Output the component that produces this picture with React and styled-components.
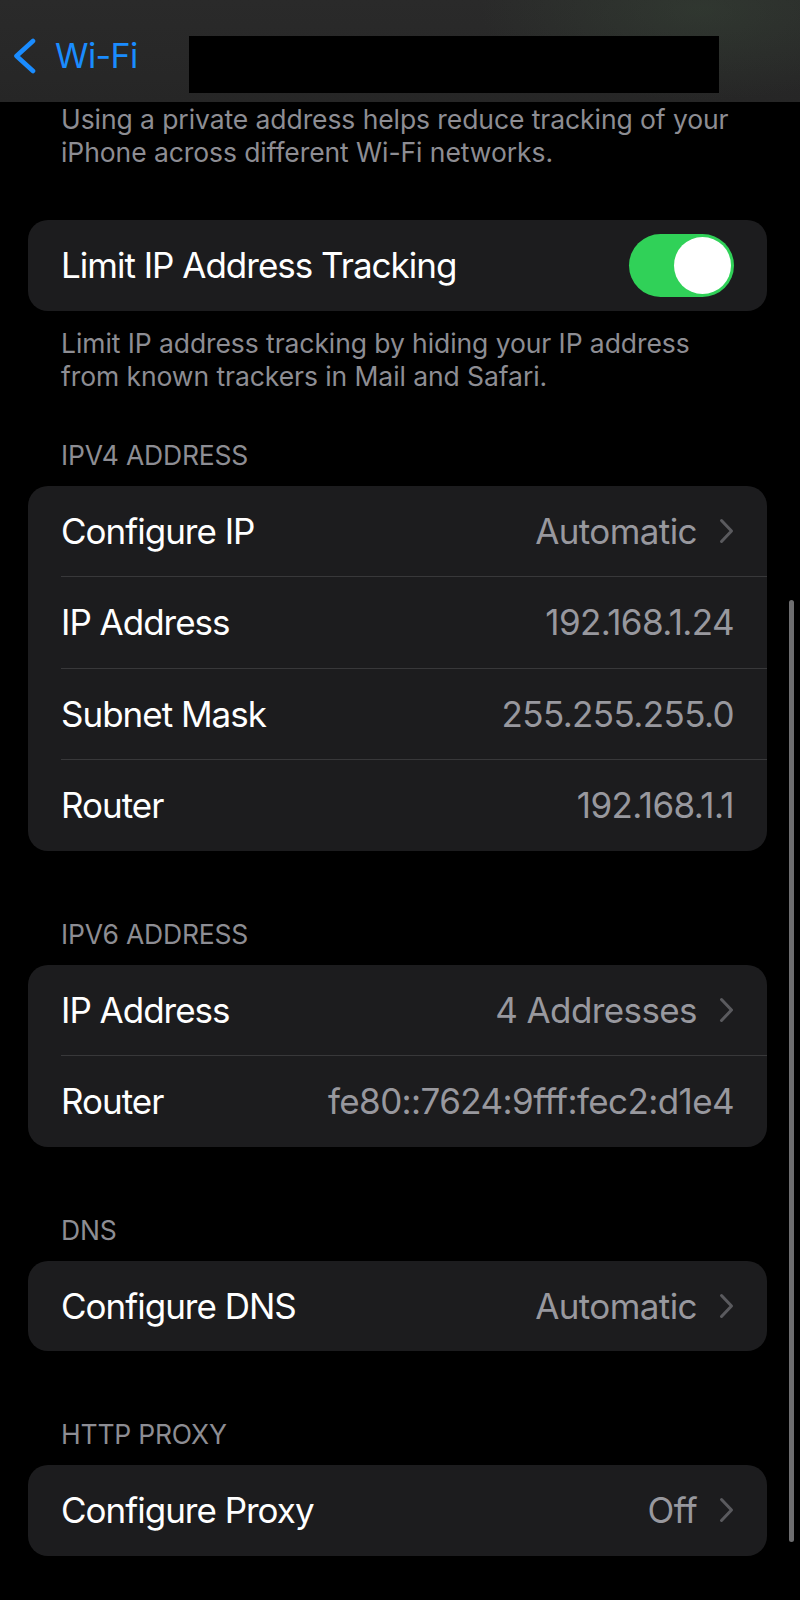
import React from "react";
import styled, { createGlobalStyle } from "styled-components";

const GlobalStyle = createGlobalStyle`
  body {
    margin: 0;
    background: #000;
    font-family: "Inter", "Roboto", sans-serif;
    -webkit-font-smoothing: antialiased;
  }
`;

const ipv4 = [
  { label: "Configure IP", value: "Automatic", link: true },
  { label: "IP Address", value: "192.168.1.24" },
  { label: "Subnet Mask", value: "255.255.255.0" },
  { label: "Router", value: "192.168.1.1" },
];

const ipv6 = [
  { label: "IP Address", value: "4 Addresses", link: true },
  { label: "Router", value: "fe80::7624:9fff:fec2:d1e4" },
];

const Chevron = () => (
  <svg width="15" height="26" viewBox="0 0 15 26">
    <polyline
      points="2.5,2.5 12.5,13 2.5,23.5"
      fill="none"
      stroke="#5a5a5e"
      strokeWidth="3"
      strokeLinecap="round"
      strokeLinejoin="round"
    />
  </svg>
);

const Row = ({ label, value, link }) => (
  <Item>
    <Label>{label}</Label>
    <Value>{value}</Value>
    {link && <Chevron />}
  </Item>
);

const App = () => {
  return (
    <Page>
      <GlobalStyle />
      <NavBar>
        <Back>
          <svg width="26" height="36" viewBox="0 0 26 36">
            <polyline
              points="22,3 5.5,18 22,33"
              fill="none"
              stroke="#1a8cff"
              strokeWidth="4.6"
              strokeLinecap="round"
              strokeLinejoin="round"
            />
          </svg>
          <BackText>Wi-Fi</BackText>
        </Back>
        <Redacted />
      </NavBar>

      <Content>
        <Footer>
          Using a private address helps reduce tracking of your iPhone across
          different Wi-Fi networks.
        </Footer>

        <Card style={{ marginTop: 51 }}>
          <Item>
            <Label>Limit IP Address Tracking</Label>
            <Toggle>
              <Knob />
            </Toggle>
          </Item>
        </Card>
        <Footer $top={16}>
          Limit IP address tracking by hiding your IP address from known
          trackers in Mail and Safari.
        </Footer>

        <Header $top={46}>IPV4 Address</Header>
        <Card>
          {ipv4.map((r) => (
            <Row key={r.label} {...r} />
          ))}
        </Card>

        <Header>IPV6 Address</Header>
        <Card>
          {ipv6.map((r) => (
            <Row key={r.label} {...r} />
          ))}
        </Card>

        <Header>DNS</Header>
        <Card>
          <Row label="Configure DNS" value="Automatic" link />
        </Card>

        <Header>HTTP Proxy</Header>
        <Card>
          <Row label="Configure Proxy" value="Off" link />
        </Card>
      </Content>

      <ScrollBar />
    </Page>
  );
};

const Page = styled.div`
  position: relative;
  width: 800px;
  height: 1600px;
  background: #000;
  overflow: hidden;
`;

const NavBar = styled.div`
  height: 102px;
  display: flex;
  align-items: flex-start;
  background: radial-gradient(
      ellipse 220px 90px at 700px 10px,
      rgba(60, 80, 60, 0.35),
      transparent
    ),
    linear-gradient(#2a2a2a, #262626);
`;

const Back = styled.div`
  display: flex;
  align-items: center;
  gap: 18px;
  margin-top: 38px;
  height: 36px;
  padding-left: 11px;
  width: 189px;
  box-sizing: border-box;
`;

const BackText = styled.span`
  color: #1a8cff;
  font-size: 34px;
  line-height: 36px;
  letter-spacing: -0.6px;
`;

const Redacted = styled.div`
  width: 530px;
  height: 57px;
  margin-top: 36px;
  background: #000;
`;

const Content = styled.div`
  padding: 1px 33px 0 28px;
`;

const Footer = styled.p`
  margin: ${(p) => p.$top || 0}px 0 0;
  padding: 0 34px 0 33px;
  color: #8d8d93;
  font-size: 26.5px;
  line-height: 33px;
  letter-spacing: -0.08px;
`;

const Header = styled.h3`
  margin: ${(p) => p.$top || 67}px 0 14px;
  padding-left: 33px;
  color: #8d8d93;
  font-size: 26.5px;
  font-weight: 400;
  line-height: 33px;
  text-transform: uppercase;
  letter-spacing: -0.2px;
`;

const Card = styled.div`
  background: #1c1c1e;
  border-radius: 20px;
  overflow: hidden;
`;

const Item = styled.div`
  display: flex;
  align-items: center;
  gap: 22px;
  height: 90.5px;
  padding: 0 33px;
  & + & {
    border-top: 1px solid #38383a;
    margin-left: 33px;
    padding-left: 0;
  }
`;

const Label = styled.span`
  flex: 1;
  color: #fff;
  font-size: 35px;
  letter-spacing: -1px;
`;

const Value = styled.span`
  color: #98989e;
  font-size: 35px;
  letter-spacing: -0.6px;
`;

const Toggle = styled.div`
  width: 105px;
  height: 63px;
  border-radius: 32px;
  background: #30d158;
  display: flex;
  align-items: center;
  justify-content: flex-end;
  padding: 0 3px;
  box-sizing: border-box;
`;

const Knob = styled.div`
  width: 57px;
  height: 57px;
  border-radius: 50%;
  background: #fff;
`;

const ScrollBar = styled.div`
  position: absolute;
  left: 789px;
  top: 600px;
  width: 5px;
  height: 942px;
  border-radius: 3px;
  background: #6e6e70;
`;

export default App;
